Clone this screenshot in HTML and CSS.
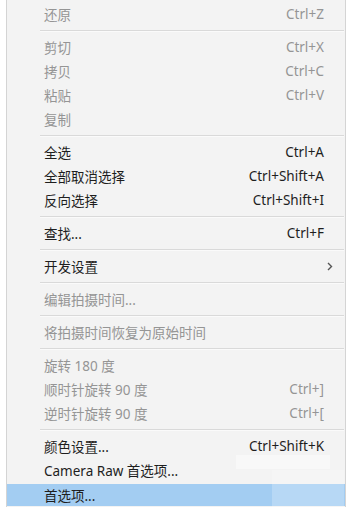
FILE: index.html
```html
<!DOCTYPE html>
<html lang="zh-CN">
<head>
<meta charset="utf-8">
<title>编辑菜单</title>
<link rel="stylesheet" href="styles.css">
</head>
<body>
<div class="menu">
  <div class="item off"><span class="label">还原</span><span class="key">Ctrl+Z</span></div>
  <div class="sep"></div>
  <div class="item off"><span class="label">剪切</span><span class="key">Ctrl+X</span></div>
  <div class="item off"><span class="label">拷贝</span><span class="key">Ctrl+C</span></div>
  <div class="item off"><span class="label">粘贴</span><span class="key">Ctrl+V</span></div>
  <div class="item off"><span class="label">复制</span><span class="key"></span></div>
  <div class="sep"></div>
  <div class="item"><span class="label">全选</span><span class="key">Ctrl+A</span></div>
  <div class="item"><span class="label">全部取消选择</span><span class="key">Ctrl+Shift+A</span></div>
  <div class="item"><span class="label">反向选择</span><span class="key">Ctrl+Shift+I</span></div>
  <div class="sep"></div>
  <div class="item"><span class="label">查找...</span><span class="key">Ctrl+F</span></div>
  <div class="sep"></div>
  <div class="item"><span class="label">开发设置</span><span class="key"></span><span class="arrow"><svg width="6" height="9" viewBox="0 0 6 9"><path d="M1 1 L4.5 4.5 L1 8" fill="none" stroke="#555" stroke-width="1.4"/></svg></span></div>
  <div class="sep"></div>
  <div class="item off"><span class="label">编辑拍摄时间...</span><span class="key"></span></div>
  <div class="sep"></div>
  <div class="item off"><span class="label">将拍摄时间恢复为原始时间</span><span class="key"></span></div>
  <div class="sep"></div>
  <div class="item off"><span class="label">旋转 180 度</span><span class="key"></span></div>
  <div class="item off"><span class="label">顺时针旋转 90 度</span><span class="key">Ctrl+]</span></div>
  <div class="item off"><span class="label">逆时针旋转 90 度</span><span class="key">Ctrl+[</span></div>
  <div class="sep"></div>
  <div class="item"><span class="label">颜色设置...</span><span class="key">Ctrl+Shift+K</span></div>
  <div class="item"><span class="label">Camera Raw 首选项...</span><span class="key"></span></div>
  <div class="item active"><span class="label">首选项...</span><span class="key"></span></div>
</div>
<div class="smudge smudge-a"></div>
<div class="smudge smudge-b"></div>
</body>
</html>
```
FILE: styles.css
```css
html, body {
  margin: 0;
  padding: 0;
  background: #ffffff;
  width: 357px;
  height: 507px;
  overflow: hidden;
}
body {
  font-family: "Noto Sans", "Noto Sans CJK SC", sans-serif;
  font-size: 13.5px;
  position: relative;
}
.menu {
  margin-left: 6px;
  width: 338px;
  height: 507px;
  box-sizing: content-box;
  background: #f3f3f3;
  border-left: 1px solid #d4d4d4;
  border-right: 1px solid #d4d4d4;
  padding-top: 2px;
}
.item {
  height: 24px;
  display: flex;
  align-items: center;
  padding-left: 37px;
  padding-right: 21px;
  color: #1e1e1e;
  position: relative;
}
.item.off {
  color: #959595;
}
.item.active {
  background: #a3cdf2;
  margin-top: 2px;
  height: 22px;
}
.label {
  flex: 1;
  white-space: nowrap;
}
.key {
  white-space: nowrap;
  color: inherit;
}
.arrow {
  position: absolute;
  right: 12px;
  top: 8px;
  display: flex;
}
.sep {
  height: 9px;
  margin-left: 33px;
  margin-right: 1px;
  display: flex;
  flex-direction: column;
  padding-top: 4px;
  box-sizing: border-box;
}
.sep::before {
  content: "";
  display: block;
  height: 1px;
  background: #d9d9d9;
}
.sep::after {
  content: "";
  display: block;
  height: 1px;
  background: #fafafa;
}
.smudge {
  position: absolute;
  pointer-events: none;
}
.smudge-a {
  left: 236px;
  top: 455px;
  width: 94px;
  height: 14px;
  background: rgba(255, 255, 255, 0.45);
}
.smudge-b {
  left: 272px;
  top: 470px;
  width: 72px;
  height: 37px;
  background: rgba(255, 255, 255, 0.22);
}
```
